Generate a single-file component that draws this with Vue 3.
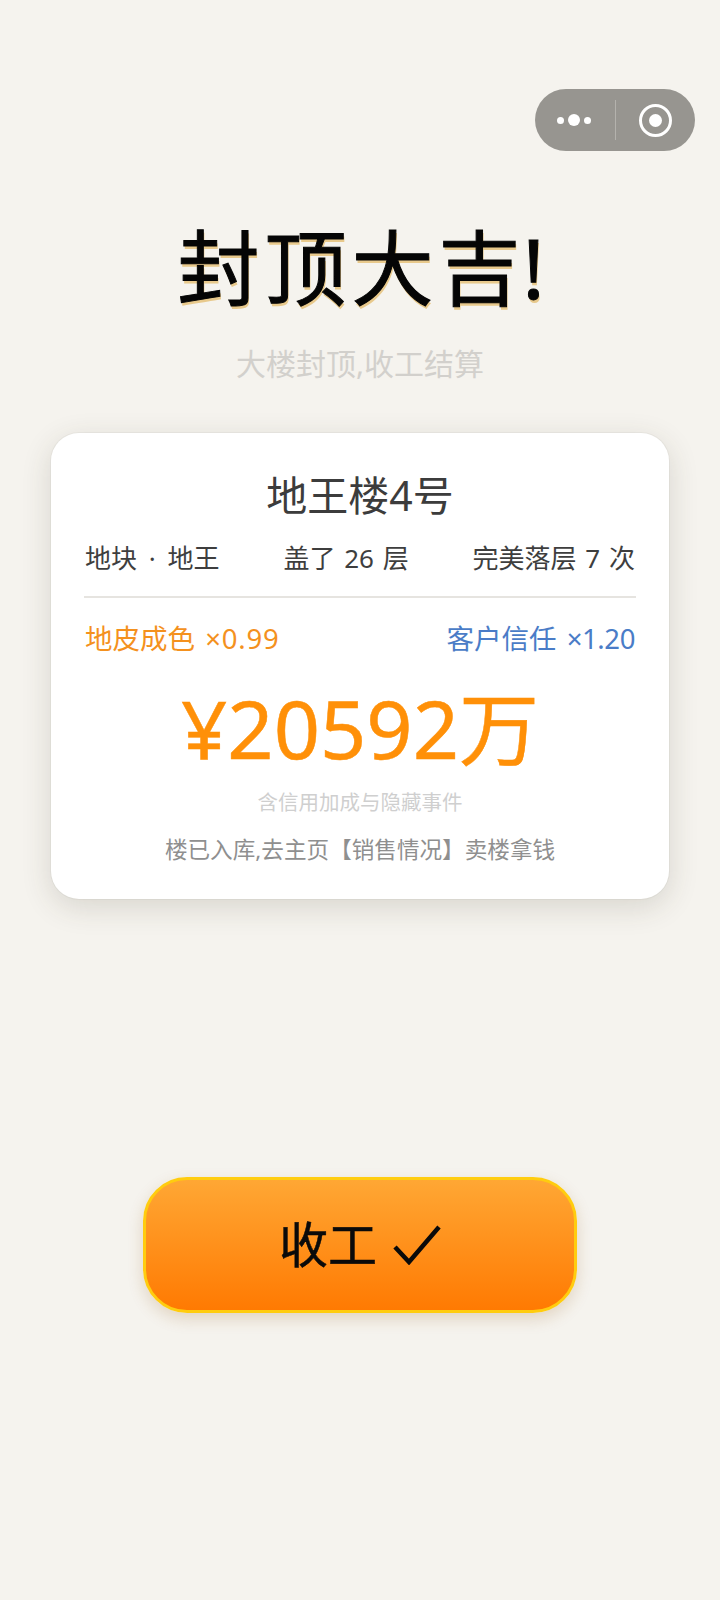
<template>
  <div class="page">
    <div class="capsule">
      <div class="dots"><i /><i class="big" /><i /></div>
      <div class="line" />
      <div class="target"><i /></div>
    </div>

    <h1 class="title">封顶大吉<span class="bang">!</span></h1>
    <p class="sub">大楼封顶,收工结算</p>

    <div class="card">
      <div class="name">地王楼4号</div>
      <div class="stats">
        <span>地块<span class="dot"> · </span>地王</span>
        <span>盖了 26 层</span>
        <span>完美落层 7 次</span>
      </div>
      <div class="rates">
        <span class="orange">地皮成色 <span class="wide">×0.99</span></span>
        <span class="blue">客户信任 <span class="tight">×1.20</span></span>
      </div>
      <div class="price">¥20592<span class="unit">万</span></div>
      <div class="note">含信用加成与隐藏事件</div>
      <div class="tip">楼已入库,去主页【销售情况】卖楼拿钱</div>
    </div>

    <button class="done">
      <span class="label">收工</span>
      <svg width="48" height="40" viewBox="0 0 48 40">
        <path d="M2 22 L16 37 L46 2" fill="none" stroke="#0a0a0a" stroke-width="4.5" />
      </svg>
    </button>
  </div>
</template>

<script setup>
</script>

<style>
  html, body { margin: 0; background: #f5f3ee; }
</style>

<style scoped>
  .page {
    position: relative;
    box-sizing: border-box;
    height: 1600px;
    padding-top: 211px;
    background: #f5f3ee;
    display: flex;
    flex-direction: column;
    align-items: center;
    font-family: "Noto Sans", "Noto Sans CJK SC", sans-serif;
  }
  .capsule {
    position: absolute;
    top: 89px;
    left: 535px;
    width: 160px;
    height: 62px;
    border-radius: 31px;
    background: #979590;
    display: flex;
    align-items: center;
  }
  .dots {
    width: 78px;
    margin-right: 2px;
    display: flex;
    justify-content: center;
    align-items: center;
    gap: 4px;
  }
  .dots i { width: 7px; height: 7px; border-radius: 50%; background: #fff; }
  .dots i.big { width: 12px; height: 12px; }
  .line { width: 1px; height: 40px; background: #b4b2ad; }
  .target {
    margin-left: 23px;
    box-sizing: border-box;
    width: 33px;
    height: 33px;
    border: 3.5px solid #fff;
    border-radius: 50%;
    display: flex;
    align-items: center;
    justify-content: center;
  }
  .target i { width: 13px; height: 13px; border-radius: 50%; background: #fff; }

  .title {
    margin: 0;
    padding-left: 7px;
    font-size: 82px;
    line-height: 112px;
    font-weight: 400;
    letter-spacing: 5px;
    color: #050505;
    -webkit-text-stroke: 1px #050505;
    text-shadow: 1px 3px 0 #e8c98c;
  }
  .bang { margin-left: -3px; }
  .sub {
    margin: 18px 0 0;
    font-size: 30px;
    line-height: 46px;
    color: #d2d0cc;
  }

  .card {
    box-sizing: border-box;
    width: 618px;
    height: 466px;
    margin-top: 46px;
    padding: 32px 33px 0;
    background: #fff;
    border-radius: 28px;
    box-shadow: 0 0 0 1px rgba(60, 55, 40, 0.04), 0 8px 30px rgba(60, 55, 40, 0.16);
  }
  .name {
    text-align: center;
    font-size: 41px;
    line-height: 60px;
    color: #3c3c3c;
  }
  .stats {
    display: flex;
    justify-content: space-between;
    margin-top: 13px;
    padding: 0 1px 18px;
    border-bottom: 2px solid #e6e4e0;
    font-size: 26px;
    line-height: 40px;
    word-spacing: 2px;
    color: #3e3e3e;
  }
  .dot { margin: 0 3px; }
  .rates {
    display: flex;
    justify-content: space-between;
    margin-top: 20px;
    padding: 0 1px;
    font-size: 27.5px;
    line-height: 42px;
    word-spacing: 3px;
  }
  .orange { color: #f4911e; }
  .blue { color: #4a7cc7; }
  .wide { letter-spacing: 0.8px; }
  .tight { letter-spacing: -0.4px; }
  .price {
    margin-top: 18px;
    text-align: center;
    font-size: 81px;
    line-height: 100px;
    color: #ff9008;
    -webkit-text-stroke: 0.5px #ff9008;
  }
  .unit { font-size: 80px; }
  .note {
    margin-top: 9px;
    text-align: center;
    font-size: 20.5px;
    line-height: 30px;
    color: #cfcfcf;
  }
  .tip {
    margin-top: 16px;
    text-align: center;
    font-size: 22.6px;
    line-height: 34px;
    color: #8f8f8f;
  }

  .done {
    box-sizing: border-box;
    width: 434px;
    height: 136px;
    margin-top: 278px;
    padding: 0;
    border: 3px solid #ffcc0f;
    border-radius: 44px;
    background: linear-gradient(#ffa734, #ff7a02);
    box-shadow: 0 6px 16px rgba(150, 90, 20, 0.2);
    display: flex;
    align-items: center;
    justify-content: center;
    gap: 16px;
    font-family: inherit;
    font-size: 49px;
    color: #0a0a0a;
    -webkit-text-stroke: 0.5px #0a0a0a;
  }
  .label { margin-bottom: 8px; }
</style>
